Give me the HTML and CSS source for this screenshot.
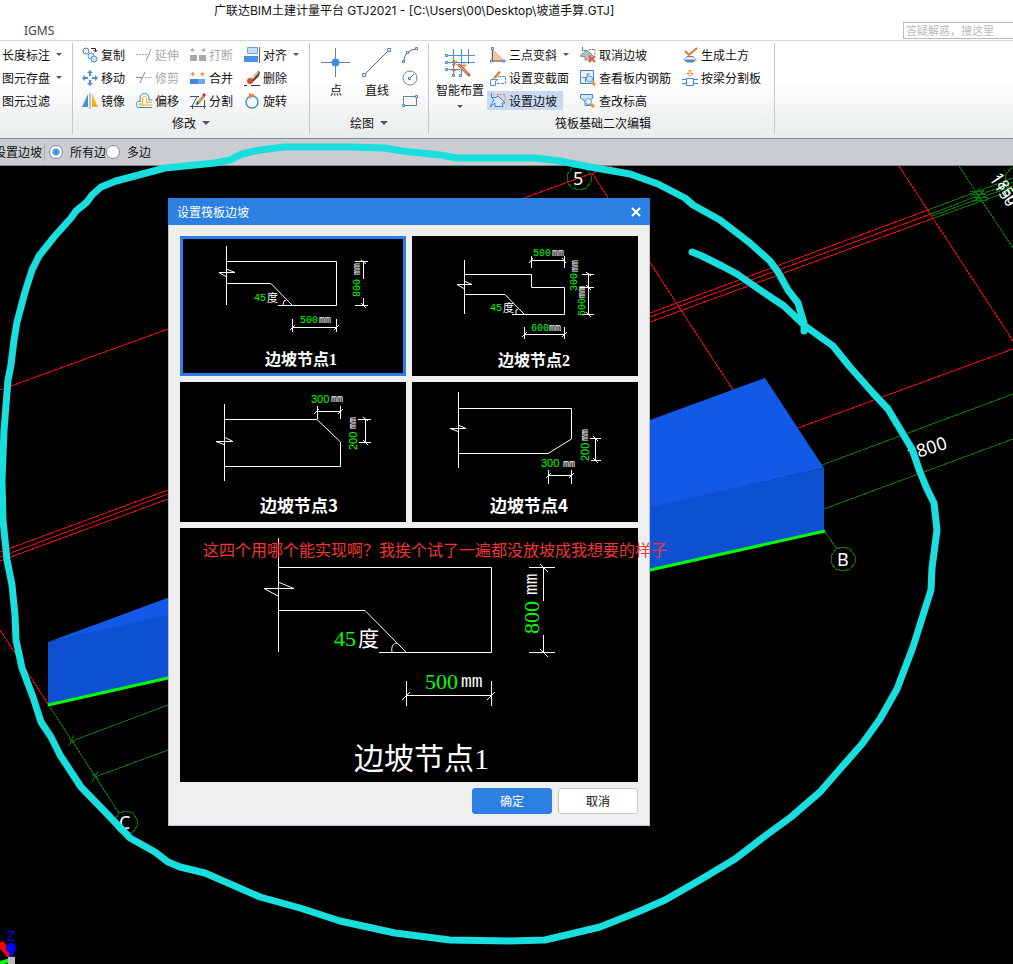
FILE: index.html
```html
<!DOCTYPE html>
<html lang="zh-CN">
<head>
    <meta charset="UTF-8">
    <meta name="viewport" content="width=device-width, initial-scale=1.0">
    <title>广联达BIM土建计量平台 GTJ2021</title>
    <link rel="stylesheet" href="styles.css">
</head>
<body>

<div class="app">
    <header class="titlebar">
        <h1>广联达BIM土建计量平台 GTJ2021 - [C:\Users\00\Desktop\坡道手算.GTJ]</h1>
        <div class="tabs">
            <a class="tab" href="#">IGMS</a>
            <input class="search" type="text" placeholder="答疑解惑，搜这里" aria-label="搜索">
        </div>
    </header>

    <nav class="ribbon">
        <section class="group general">
            <div class="column">
                <button class="tool">长度标注<i class="caret"></i></button>
                <button class="tool">图元存盘<i class="caret"></i></button>
                <button class="tool">图元过滤</button>
            </div>
        </section>

        <section class="group modify">
            <div class="columns">
                <div class="column">
                    <button class="tool">
                        <svg viewBox="0 0 16 16"><circle cx="4" cy="4" r="3" fill="#eef3f5" stroke="#6b7a82"/><circle cx="9" cy="9" r="3" fill="#eaf3fb" stroke="#4d94d8"/><circle cx="12" cy="12" r="3" fill="#cfe4f8" stroke="#4d94d8"/><path d="M9 1.500h4.500V4M11.500 3l2 2 2-2" fill="none" stroke="#222"/></svg>复制
                    </button>
                    <button class="tool">
                        <svg viewBox="0 0 16 16"><path d="M8 0l3 3H5zM8 16l3-3H5zM0 8l3-3v6zM16 8l-3-3v6zM7 3h2v3H7zM7 10h2v3H7zM3 7h3v2H3zM10 7h3v2h-3z" fill="#4a90d9"/></svg>移动
                    </button>
                    <button class="tool">
                        <svg viewBox="0 0 16 16"><path d="M6 1v13H0z" fill="#4a90d9"/><path d="M10 1v13h6z" fill="#f9b11b"/><path d="M8 0v16" stroke="#8a8a8a"/></svg>镜像
                    </button>
                </div>
                <div class="column">
                    <button class="tool" disabled>
                        <svg viewBox="0 0 16 16"><path d="M0 7.500h11" stroke="#aaa" stroke-dasharray="2 1"/><path d="M10 14l5-12" stroke="#999"/></svg>延伸
                    </button>
                    <button class="tool" disabled>
                        <svg viewBox="0 0 16 16"><path d="M0 7.500h6M4 13l5-11" stroke="#888"/><path d="M9 7.500h7" stroke="#aaa" stroke-dasharray="2 1"/></svg>修剪
                    </button>
                    <button class="tool">
                        <svg viewBox="0 0 16 16" fill="none"><path d="M16 14.500H2C0 14 0 9 2 8.500h2V5c0-6 9-6 9 0v2h3" stroke="#3f82d0"/><path d="M16 12H3v-1h3.500V5c0-2 4-2 4 0v4.500H16" stroke="#f5ad1c"/></svg>偏移
                    </button>
                </div>
                <div class="column">
                    <button class="tool" disabled>
                        <svg viewBox="0 0 16 16" fill="#aaa"><path d="M0 8h7v6H0zM9 8h7v6H9zM0 3l3-2v4zM16 3l-3-2v4zM3 2.500h2v1H3zM11 2.500h2v1h-2z"/></svg>打断
                    </button>
                    <button class="tool">
                        <svg viewBox="0 0 16 16"><path d="M0 9h8v5H0z" fill="#3f86dd"/><path d="M8 9h7v5H8z" fill="#68a7ef"/><path d="M0 3.500h2v1H0zM2 1.500L5 4 2 6.500zM13 3.500h2v1h-2zM13 1.500L10 4l3 2.500z" fill="#ed9a35"/></svg>合并
                    </button>
                    <button class="tool">
                        <svg viewBox="0 0 16 16"><path d="M0 3.500h9M0 13.500h16M2 13l5-9M14.500 7v9M2.500 12v4" fill="none" stroke="#3b5577"/><path d="M8 10l6-7" stroke="#c19a5c" stroke-width="3"/><path d="M13 3l2-2" stroke="#c33" stroke-width="3"/><path d="M7 8l2 3-3 1z" fill="#333"/></svg>分割
                    </button>
                </div>
                <div class="column">
                    <button class="tool">
                        <svg viewBox="0 0 16 16"><path d="M3.500 .5h10v6h-10z" fill="#c5ddf6" stroke="#6ba3dd"/><path d="M0 9h14v6H0z" fill="#4a90e2"/><path d="M15.500 0v16" stroke="#667"/></svg>对齐<i class="caret"></i>
                    </button>
                    <button class="tool">
                        <svg viewBox="0 0 16 16"><path d="M5 11L14 1l2 1-1 4-7 7z" fill="#4b443c"/><path d="M8 9l6-7" stroke="#e5c48d" stroke-width="2"/><ellipse cx="6" cy="11" rx="3" ry="3" fill="#e2482d"/><path d="M0 15.500h3M7 15.500h9" stroke="#333"/></svg>删除
                    </button>
                    <button class="tool">
                        <svg viewBox="0 0 16 16"><circle cx="8" cy="9" r="6" fill="none" stroke="#4a90d9" stroke-width="1.500"/><path d="M5 0l6 2-6 4z" fill="#ee8130"/></svg>旋转
                    </button>
                </div>
            </div>
            <button class="caption">修改<i class="caret wide"></i></button>
        </section>

        <section class="group draw">
            <div class="columns">
                <button class="big">
                    <svg viewBox="0 0 32 32"><path d="M15.500 1v29M1 15.500h29" stroke="#70838c"/><circle cx="15.500" cy="15.500" r="4" fill="#3f8ee8"/></svg>
                    点
                </button>
                <button class="big">
                    <svg viewBox="0 0 32 32"><path d="M3 28L28 3" stroke="#53666e"/><path d="M1.500 26.500h3v3h-3zM26.500 1.500h3v3h-3z" fill="#fff" stroke="#3f82d0"/></svg>
                    直线
                </button>
                <div class="column shapes">
                    <button class="tool" aria-label="弧">
                        <svg viewBox="0 0 16 16"><path d="M2 14C2 8 6 3 14 2" fill="none" stroke="#53666e"/><path d="M.5 13.500h2v2h-2zM4.500 4.500h2v2h-2zM13.500 .5h2v2h-2z" fill="#fff" stroke="#3f82d0"/></svg>
                    </button>
                    <button class="tool" aria-label="圆">
                        <svg viewBox="0 0 16 16"><circle cx="8" cy="8" r="7" fill="none" stroke="#70838c"/><path d="M8 8l4-4" stroke="#3f82d0"/><path d="M6.500 7.500h2v2h-2z" fill="#fff" stroke="#3f82d0"/></svg>
                    </button>
                    <button class="tool" aria-label="矩形">
                        <svg viewBox="0 0 16 16"><path d="M1.500 3.500h13v9h-13z" fill="none" stroke="#70838c"/><path d="M.5 11.500h2v2h-2zM13.500 2.500h2v2h-2z" fill="#fff" stroke="#3f82d0"/></svg>
                    </button>
                </div>
            </div>
            <button class="caption">绘图<i class="caret wide"></i></button>
        </section>

        <section class="group raft">
            <div class="columns">
                <button class="big">
                    <svg viewBox="0 0 32 32"><path d="M3 8.500h28M3 15.500h28M3 22.500h13M9.500 2v26M17.500 2v25M24.500 2v15" fill="none" stroke="#4a90d9"/><path d="M1.500 7.500h2v2h-2zM1.500 14.500h2v2h-2zM1.500 21.500h2v2h-2zM8.500 27.500h2v2h-2zM15.500 27.500h2v2h-2z" fill="#fff" stroke="#3f82d0"/><path d="M15 18l10 10" stroke="#b5683a" stroke-width="3" stroke-linecap="round"/><path d="M15 18l9 9" stroke="#f0ba85"/><path d="M8 14l5 4M13 14l-5 4M10.500 13v6M10 21v5M7.500 23.500h5M20 16v5M17.500 18.500h5" stroke="#ee7528"/></svg>
                    智能布置
                    <i class="caret"></i>
                </button>
                <div class="column">
                    <button class="tool">
                        <svg viewBox="0 0 16 16"><path d="M2 2l12 12H2z" fill="#fdc39a" stroke="#e6a577"/><path d="M2.500 2v12H14" fill="none" stroke="#53666e"/><path d="M1.500 .5h2v2h-2zM.5 13h2v2h-2zM13 13h2v2h-2z" fill="#fff" stroke="#3f82d0"/></svg>三点变斜<i class="caret"></i>
                    </button>
                    <button class="tool">
                        <svg viewBox="0 0 16 16"><path d="M3 8l6-7 2 1-5 6-4 1z" fill="#f27b21"/><path d="M1 9.500h7L5.500 11v4.500h-5V11z" fill="#fff" stroke="#4a90d9"/><path d="M8 6.500h7.500v7H6" fill="none" stroke="#4a90d9" stroke-dasharray="3 1"/></svg>设置变截面
                    </button>
                    <button class="tool active">
                        <svg viewBox="0 0 16 16"><path d="M5 5l3-2 7 7h-3l1 3.500H5V10L0 14l4-7-2-2.500h4M1.500 0v4.500" fill="#dbe9fa" stroke="#3f86d6"/><path d="M7 1.500h8v8z" fill="none" stroke="#ef8a3a" stroke-dasharray="2 1"/></svg>设置边坡
                    </button>
                </div>
                <div class="column">
                    <button class="tool">
                        <svg viewBox="0 0 16 16"><path d="M2.500 0v4M2 3.500h5" stroke="#3f86d6"/><path d="M0 9l7-6 6 6h-3v4H5v-3z" fill="#bbb" stroke="#888"/><path d="M9 2.500h6v5" fill="none" stroke="#777" stroke-dasharray="2 1"/><path d="M9 9l6 6M15 9l-6 6" stroke="#e3533c" stroke-width="2"/></svg>取消边坡
                    </button>
                    <button class="tool">
                        <svg viewBox="0 0 16 16"><path d="M.5 .5h13v13H.5z" fill="#e8f1fb" stroke="#3f82d0"/><path d="M2 7.500h5V4h3M5.500 7v5" fill="none" stroke="#70838c"/><circle cx="9.500" cy="9" r="3" fill="#d5e7f8" stroke="#5c9ad8"/><path d="M12 12l3 3" stroke="#f09422" stroke-width="3"/></svg>查看板内钢筋
                    </button>
                    <button class="tool">
                        <svg viewBox="0 0 16 16"><path d="M.5 1.500h12v4l-2 1v6H5V8L.5 5z" fill="#cfe2f8" stroke="#3f86d6"/><circle cx="8.500" cy="8.500" r="3" fill="#eaf3fc" stroke="#5c9ad8"/><path d="M11 11l3 3" stroke="#f09422" stroke-width="3"/></svg>查改标高
                    </button>
                </div>
                <div class="column">
                    <button class="tool">
                        <svg viewBox="0 0 16 16"><path d="M3 4l4 4 8-7" fill="none" stroke="#ee7326" stroke-width="2"/><path d="M1 12.500h14l-4 3H5z" fill="#4f86bb"/><path d="M3 11.500l2-2h6l2 2" fill="#dde5ea" stroke="#70838c"/></svg>生成土方
                    </button>
                    <button class="tool">
                        <svg viewBox="0 0 16 16"><path d="M0 9.500h4M12 9.500h4M0 13.500h4M12 13.500h4M4.500 8.500h7v7h-7z" fill="none" stroke="#3f86d6"/><path d="M7 .5h2v3h2L8 6.500 5 3.500h2z" fill="#fff" stroke="#ee8a2a"/></svg>按梁分割板
                    </button>
                </div>
            </div>
            <div class="caption">筏板基础二次编辑</div>
        </section>
    </nav>

    <form class="options">
        <span class="mode">设置边坡</span>
        <label><input type="radio" name="edge" checked>所有边</label>
        <label><input type="radio" name="edge">多边</label>
    </form>

    <main class="viewport">
        <svg class="scene" viewBox="0 166 1013 798" preserveAspectRatio="xMinYMin slice">
            <!-- axis grid -->
            <g class="axis">
                <path d="M0 390L168 329M524 198L612 166M0 552L168 490M0 557L168 494M0 561L168 499"/>
                <path d="M650 313L928 210M650 317L931 214M650 322L934 218"/>
                <path d="M592 173L733 390M899 166L1013 341M798 428L1013 349M0 630L48 704"/>
            </g>
            <g class="dim">
                <path d="M928 210L1013 178M931 214L1013 182M932 216L1013 186M934 218L1013 190"/>
                <path d="M959 166L1013 248M822 465L1013 394M824 509L1013 439M825 532L837 549"/>
                <path d="M48 704L119 813M72 741L168 705M95 777L168 750"/>
                <path d="M69 746L74 735M69 738L75 743M92 782L98 771M92 774L99 780"/>
                <path d="M970 191H984M972 194H986M974 197H988M976 200H987M974 202L984 190M971 197L981 187"/>
                <path d="M579 166l7 2 5 7v7l-5 6-7 2-7-2-5-6v-7l5-7z"/>
                <path d="M843 547l7 2 5 7v7l-5 6-7 2-7-2-5-6v-7l5-7z"/>
                <path d="M126 811l7 2 4 7v6l-4 6-7 2-7-2-4-6v-6l4-7z"/>
                <path d="M1017 166l-7 3-5 7v6l5 6 7 2"/>
            </g>

            <!-- ramp slab -->
            <path class="top" d="M48 642L650 420 765 378 824 468 650 508 168 616z"/>
            <path class="side" d="M48 642L650 507 824 468V530L650 570 48 704z"/>
            <path class="base" d="M48 705L168 678 650 570 825 531"/>

            <g class="mark">
                <text x="573" y="185">5</text>
                <text x="837" y="566">B</text>
                <text x="119" y="829">C</text>
                <text transform="translate(909 461) rotate(-18)">1800</text>
                <text transform="translate(989 179) rotate(57)" class="size">1150</text>
                <text transform="translate(992 177) rotate(57)" class="size">1850</text>
            </g>

            <!-- orientation gizmo -->
            <path d="M0 943L11 956" stroke="#f00" stroke-width="7"/>
            <path d="M0 963L11 960" stroke="#0f0" stroke-width="4"/>
            <path d="M11 948v10" stroke="#00f" stroke-width="4"/>
            <circle cx="11" cy="948" r="5" fill="#00f"/>
            <path d="M8 957h7v7H8z" fill="#bbb"/>
            <text x="7" y="941" class="z">Z</text>
        </svg>

        <section class="dialog" role="dialog" aria-labelledby="dialogTitle">
            <div class="dialog-title">
                <h2 id="dialogTitle">设置筏板边坡</h2>
                <button class="close" aria-label="关闭"><svg viewBox="0 0 10 10"><path d="M1 1l8 8M9 1L1 9"/></svg></button>
            </div>
            <div class="dialog-body">
                <div class="nodes">
                    <button class="node selected">
                        <svg viewBox="0 0 226 140">
                            <g class="line">
                                <path d="M46.500 10V69M46.500 25.500H156.500V69.500H98M46.500 47.500H91L112 69"/>
                                <path d="M46 33l9 3.500H39l7 4M103 69l1-4 2-1"/>
                                <path d="M112.500 83V96M156.500 83V96M112 91.500H157M110 94l5-5M154 94l5-5"/>
                                <path d="M175 25.500H188M175 69.500H188M183.500 25V43M183.500 62V69M181 24l5 4M181 67l5 5"/>
                            </g>
                            <text class="num" x="74" y="65">45</text><text class="deg" x="87" y="66">度</text>
                            <text class="num" x="120" y="87">500</text><text class="unit" x="139" y="87">mm</text>
                            <text class="num" transform="translate(180 61) rotate(-90)">800</text>
                            <text class="unit" transform="translate(180 39) rotate(-90)">mm</text>
                            <text class="name" x="85" y="129">边坡节点1</text>
                        </svg>
                    </button>
                    <button class="node">
                        <svg viewBox="0 0 226 140">
                            <g class="line">
                                <path d="M52.500 24V78M52.500 38.500H119.500V51.500H152.500V78.500H100M52.500 58.500H93L112 78"/>
                                <path d="M52 45l8 3.500H45l7 4M104 78v-4l2-1"/>
                                <path d="M119.500 20V32M152.500 20V32M119 24.500H153M117 27l4-5M150 22l4 5"/>
                                <path d="M112.500 91V103M152.500 91V103M112 98.500H153M110 101l5-5M150 101l5-5"/>
                                <path d="M170 38.500H182M168 51.500H182M170 78.500H182M176.500 37V79M174 36l5 4M174 49l5 5M174 76l5 5"/>
                            </g>
                            <text class="num" x="78" y="75">45</text><text class="deg" x="91" y="76">度</text>
                            <text class="num" x="121" y="20">500</text><text class="unit" x="140" y="20">mm</text>
                            <text class="num" x="119" y="95">600</text><text class="unit" x="137" y="95">mm</text>
                            <text class="num" transform="translate(165 55) rotate(-90)">300</text>
                            <text class="unit" transform="translate(166 36) rotate(-90)">mm</text>
                            <text class="num" transform="translate(173 80) rotate(-90)">500</text>
                            <text class="unit" transform="translate(173 62) rotate(-90)">mm</text>
                            <text class="name" x="86" y="130">边坡节点2</text>
                        </svg>
                    </button>
                    <button class="node plain">
                        <svg viewBox="0 0 226 140">
                            <g class="line">
                                <path d="M44.500 22V99M44.500 37.500H137L160.500 60V84.500H44.500"/>
                                <path d="M44 55l9 4.500H36l8 3"/>
                                <path d="M137.500 24V37M160.500 24V37M137 29.500H161M134 32l5-5M158 32l5-5"/>
                                <path d="M178 37.500H191M179 60.500H191M185.500 37V60M183 35l5 4M183 58l5 5"/>
                            </g>
                            <text class="num" x="131" y="21">300</text><text class="unit" x="151" y="20">mm</text>
                            <text class="num" transform="translate(177 68) rotate(-90)">200</text>
                            <text class="unit" transform="translate(176 47) rotate(-90)">mm</text>
                            <text class="name" x="80" y="130">边坡节点3</text>
                        </svg>
                    </button>
                    <button class="node plain">
                        <svg viewBox="0 0 226 140">
                            <g class="line">
                                <path d="M46.500 10V86M46.500 26.500H159.500V57L136 71.500H46.500"/>
                                <path d="M46 43l8 3.500H38l8 3"/>
                                <path d="M136.500 88V102M159.500 88V102M136 93.500H160M134 96l5-5M157 96l5-5"/>
                                <path d="M178 56.500H189M179 78.500H189M183.500 56V78M181 54l5 5M181 76l5 5"/>
                            </g>
                            <text class="num" x="129" y="85">300</text><text class="unit" x="151" y="85">mm</text>
                            <text class="num" transform="translate(177 79) rotate(-90)">200</text>
                            <text class="unit" transform="translate(176 59) rotate(-90)">mm</text>
                            <text class="name" x="78" y="130">边坡节点4</text>
                        </svg>
                    </button>
                </div>

                <div class="preview">
                    <svg viewBox="0 0 458 254">
                        <g class="line">
                            <path d="M98.500 10V124M98.500 39.500H311.500V124.500H199M98.500 82.500H185L226 124"/>
                            <path d="M98 54l16 6.500H84l14 7.500M212 124c-1-5 1-9 5-9"/>
                            <path d="M226.500 153V178M311.500 153V178M226 167.500H312M222 172l8-8M307 172l8-8"/>
                            <path d="M349 39.500H375M349 124.500H375M363.500 39V73M363.500 107V124M360 36l8 8M360 121l8 8"/>
                        </g>
                        <text class="num" x="154" y="118">45</text><text class="deg" x="178" y="118">度</text>
                        <text class="num" x="245" y="161">500</text><text class="unit" x="281" y="159">mm</text>
                        <text class="num" transform="translate(359 106) rotate(-90)">800</text>
                        <text class="unit" transform="translate(357 67) rotate(-90)">mm</text>
                        <text class="name" x="174" y="241">边坡节点1</text>
                    </svg>
                </div>

                <div class="actions">
                    <button class="btn primary">确定</button>
                    <button class="btn">取消</button>
                </div>
            </div>
            <p class="note">这四个用哪个能实现啊？我挨个试了一遍都没放坡成我想要的样子</p>
        </section>
    </main>

    <!-- freehand pen stroke -->
    <svg class="pen" viewBox="0 0 1013 964" preserveAspectRatio="xMinYMin slice">
        <path d="M692 252L702 256 722 266 737 274 760 290 784 306 805 326 833 346 850 367 873 393 888 409 897 424 912 449 920 472 927 489 934 503 937 530 932 568 931 590 924 612 913 647 897 689 880 719 862 744 840 769 820 792 791 817 765 836 735 859 700 880 665 900 640 911 600 927 545 940 510 941 450 940 395 933 340 921 300 908 260 897 205 873 180 867 168 862 155 852 130 838 110 817 81 787 60 755 51 737 41 722 33 697 22 668 16 640 15 615 12 585 7 560 3 520 2 480 4 430 8 380 11 365 14 340 17 322 25 292 32 270 39 256 54 237 71 218 76 211 87 202 92 195 101 187 116 181 150 172 165 168 215 163 230 160 242 154 260 150 284 147 350 147 385 148 402 151 440 155 457 158 535 158 560 161 590 167 630 174 658 184 685 198 693 205 720 220 750 243 770 261 778 272 788 290 798 303 804 323 804 331"/>
    </svg>
</div>

</body>
</html>
```
FILE: styles.css
```css
* {
    box-sizing: border-box;
}

body {
    margin: 0;
    background-color: #000;
    color: #111;
    font-family: "Noto Sans", "Noto Sans CJK SC", sans-serif;
    font-size: 12px;
}

button, input {
    font-family: inherit;
    font-size: inherit;
    color: inherit;
}

button {
    padding: 0;
    border: none;
    background: none;
    cursor: pointer;
}

.app {
    position: relative;
    display: flex;
    flex-direction: column;
    min-height: 100vh;
    overflow: hidden;
}

/* title bar */
.titlebar {
    background-color: #fff;
    border-bottom: 1px solid #d5d5d5;
}

h1 {
    margin: 0;
    padding-left: 214px;
    font-family: Inter, "Noto Sans CJK SC", sans-serif;
    font-size: 12px;
    font-weight: normal;
    line-height: 22px;
    white-space: nowrap;
}

.tabs {
    display: flex;
    justify-content: space-between;
    height: 18px;
    line-height: 18px;
}

.tab {
    padding-left: 24px;
    color: #444;
    text-decoration: none;
}

.search {
    width: 110px;
    height: 17px;
    padding: 0 2px;
    border: 1px solid #bbb;
    border-right: none;
    font-size: 11px;
}

.search::placeholder {
    color: #bbb;
}

/* ribbon */
.ribbon {
    display: flex;
    height: 98px;
    background: linear-gradient(#fff 40%, #e8ecec);
    border-bottom: 1px solid #85898b;
}

.group {
    display: flex;
    flex-direction: column;
    margin: 2px 0 4px;
    border-right: 1px solid #c5c8ca;
}

.columns {
    display: flex;
}

.column {
    display: flex;
    flex-direction: column;
    align-items: flex-start;
}

.tool {
    display: flex;
    align-items: center;
    gap: 3px;
    height: 19px;
    margin: 2px 0;
    white-space: nowrap;
}

.tool svg {
    width: 16px;
    height: 16px;
}

.tool:disabled {
    color: #aaa;
}

.tool.active {
    margin-left: -3px;
    padding: 0 6px 0 3px;
    background-color: #c8d9f1;
}

.caret {
    margin-left: 3px;
    border: 3px solid transparent;
    border-top-color: #555;
    border-bottom: none;
}

.caret.wide {
    border-width: 4px;
    border-bottom: none;
}

.caption {
    display: flex;
    align-items: center;
    justify-content: center;
    gap: 3px;
    height: 26px;
}

.big {
    display: flex;
    flex-direction: column;
    align-items: center;
    padding-top: 4px;
    line-height: 24px;
}

.big svg {
    width: 32px;
    height: 32px;
}

.big .caret {
    margin: 2px 0 0;
}

.general {
    width: 73px;
    padding-left: 2px;
}

.modify {
    width: 237px;
    padding: 0 9px;
}

.modify .columns {
    gap: 11px;
}

.draw {
    width: 119px;
    padding: 0 10px;
}

.draw .columns {
    gap: 9px;
}

.draw .big {
    width: 32px;
    justify-content: flex-start;
}

.raft {
    width: 346px;
    padding: 0 4px 0 7px;
}

.raft .column {
    margin-left: 6px;
}

.raft .column + .column {
    margin-left: 11px;
}

.raft .caption {
    height: 30px;
}

/* tool options */
.options {
    display: flex;
    align-items: center;
    height: 27px;
    background-color: #c9ccd1;
    border-bottom: 1px solid #85898b;
    white-space: nowrap;
}

.mode {
    margin-left: -6px;
    padding-right: 2px;
    border-right: 1px solid #aaadb2;
}

.options label {
    display: flex;
    align-items: center;
    gap: 7px;
}

.mode + label {
    margin-left: 4px;
}

.options input {
    appearance: none;
    width: 14px;
    height: 14px;
    margin: 0;
    border: 1px solid #888;
    border-radius: 50%;
    background-color: #fff;
}

.options input:checked {
    background: radial-gradient(#4a9af5 3px, #fff 4px);
}

/* drawing area */
.viewport {
    position: relative;
    flex: 1;
    min-height: 670px;
}

.scene, .pen {
    position: absolute;
    top: 0;
    left: 0;
    width: 100%;
    height: 100%;
}

.axis, .dim {
    fill: none;
    stroke: #f00000;
    shape-rendering: crispEdges;
}

.dim {
    stroke: #007800;
}

.top {
    fill: #1159e6;
}

.side {
    fill: #0e50d2;
}

.base {
    fill: none;
    stroke: #0f0;
    stroke-width: 3px;
}

.mark {
    fill: #fff;
    font-size: 18px;
}

.size {
    font-size: 15px;
}

.z {
    fill: #00f;
    font-size: 14px;
}

.pen {
    pointer-events: none;
}

.pen path {
    fill: none;
    stroke: #18dede;
    stroke-width: 7px;
    stroke-linecap: round;
    stroke-linejoin: round;
}

/* dialog */
.dialog {
    position: absolute;
    top: 32px;
    left: 168px;
    width: 482px;
    background-color: #efefef;
    border: 1px solid #b8bfd0;
    border-top: none;
}

.dialog-title {
    display: flex;
    align-items: center;
    justify-content: space-between;
    height: 27px;
    margin: 0 -1px;
    padding: 0 9px;
    background-color: #2c80e2;
    color: #fff;
}

h2 {
    margin: 0;
    font-size: 12px;
    font-weight: normal;
}

.close svg {
    display: block;
    width: 10px;
    height: 10px;
    stroke: #fff;
    stroke-width: 2px;
}

.dialog-body {
    display: flex;
    flex-direction: column;
    gap: 6px;
    padding: 11px;
}

.nodes {
    display: grid;
    grid-template-columns: 1fr 1fr;
    gap: 6px;
}

.node, .preview {
    background-color: #000;
}

.node svg, .preview svg {
    display: block;
    width: 100%;
}

.selected {
    outline: 3px solid #2c80e2;
    outline-offset: -3px;
}

.line {
    fill: none;
    stroke: #fff;
}

.num {
    fill: #0f0;
    font-family: "Liberation Mono", monospace;
    font-size: 10px;
}

.unit {
    fill: #fff;
    font-family: "Liberation Mono", monospace;
    font-size: 10px;
}

.deg {
    fill: #fff;
    font-size: 11px;
}

.name {
    fill: #fff;
    font-family: "Liberation Serif", "Noto Sans CJK SC", serif;
    font-size: 16px;
    font-weight: bold;
}

.plain .num {
    font-family: "Liberation Sans", sans-serif;
    font-size: 11px;
}

.plain .unit {
    font-family: "DejaVu Sans Mono", monospace;
}

.plain .name {
    font-family: "Noto Sans CJK SC", sans-serif;
    font-size: 17px;
}

.preview .num {
    font-family: "Liberation Serif", serif;
    font-size: 22px;
}

.preview .unit {
    font-size: 18px;
}

.preview .deg {
    font-size: 21px;
}

.preview .name {
    font-size: 30px;
    font-weight: normal;
}

.actions {
    display: flex;
    justify-content: flex-end;
    gap: 6px;
}

.btn {
    width: 80px;
    height: 26px;
    border: 1px solid #c8c8c8;
    border-radius: 3px;
    background-color: #fff;
}

.primary {
    border-color: #2c80e2;
    background-color: #2c80e2;
    color: #fff;
}

/* red remark lying over the dialog and the model */
.note {
    position: absolute;
    top: 340px;
    left: 34px;
    margin: 0;
    color: #f23535;
    font-size: 16px;
    line-height: 24px;
    white-space: nowrap;
}
```
